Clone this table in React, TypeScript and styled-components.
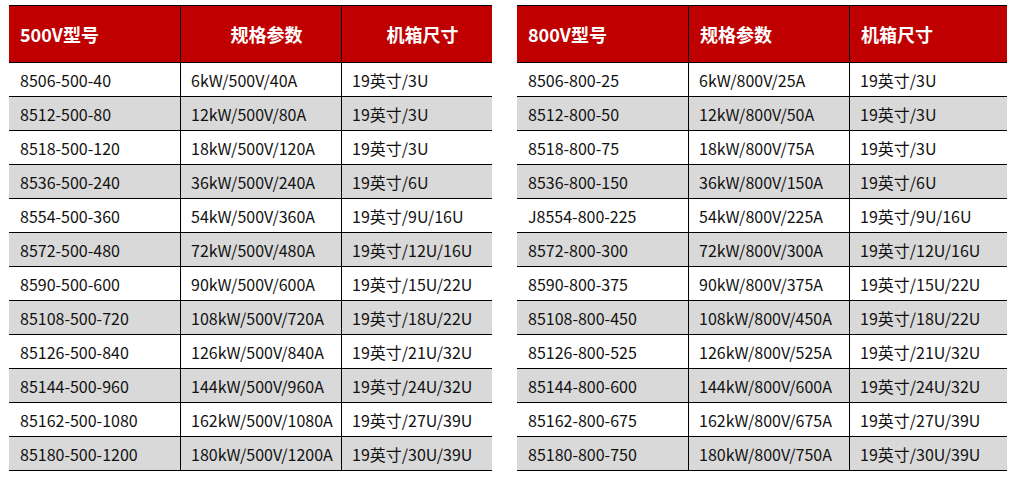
import React from "react";
import styled, { createGlobalStyle } from "styled-components";

const Global = createGlobalStyle`
  html, body { margin: 0; padding: 0; background: #ffffff; }
  body { font-family: "Noto Sans CJK SC", "Noto Sans", sans-serif; }
`;

const Page = styled.div`
  display: flex;
  align-items: flex-start;
  gap: 25px;
  padding: 5px 0 0 9px;
`;

const Table = styled.div<{ $cols: string }>`
  display: grid;
  grid-template-columns: ${(p) => p.$cols};
  border-top: 1px solid #000;
  border-bottom: 1px solid #000;
`;

const HeadCell = styled.div<{ $center?: boolean; $first?: boolean }>`
  height: 57px;
  background: #c00000;
  color: #ffffff;
  font-weight: 700;
  font-size: 18px;
  display: flex;
  align-items: center;
  justify-content: ${(p) => (p.$center ? "center" : "flex-start")};
  padding: 0 0 0 11px;
  box-sizing: border-box;
  border-left: ${(p) => (p.$first ? "none" : "1px solid #000")};
  border-bottom: 1px solid #000;
  white-space: nowrap;
`;

const Cell = styled.div<{ $gray: boolean; $first?: boolean; $last?: boolean }>`
  height: ${(p) => (p.$last ? "33px" : "34px")};
  background: ${(p) => (p.$gray ? "#d9d9d9" : "#ffffff")};
  color: #111;
  font-size: 16px;
  display: flex;
  align-items: center;
  padding-left: ${(p) => (p.$first ? "11px" : "10px")};
  box-sizing: border-box;
  border-left: ${(p) => (p.$first ? "none" : "1px solid #000")};
  border-bottom: ${(p) => (p.$last ? "none" : "1px solid #000")};
  white-space: nowrap;
`;

type Row = [string, string, string];

const left: Row[] = [
  ["8506-500-40", "6kW/500V/40A", "19英寸/3U"],
  ["8512-500-80", "12kW/500V/80A", "19英寸/3U"],
  ["8518-500-120", "18kW/500V/120A", "19英寸/3U"],
  ["8536-500-240", "36kW/500V/240A", "19英寸/6U"],
  ["8554-500-360", "54kW/500V/360A", "19英寸/9U/16U"],
  ["8572-500-480", "72kW/500V/480A", "19英寸/12U/16U"],
  ["8590-500-600", "90kW/500V/600A", "19英寸/15U/22U"],
  ["85108-500-720", "108kW/500V/720A", "19英寸/18U/22U"],
  ["85126-500-840", "126kW/500V/840A", "19英寸/21U/32U"],
  ["85144-500-960", "144kW/500V/960A", "19英寸/24U/32U"],
  ["85162-500-1080", "162kW/500V/1080A", "19英寸/27U/39U"],
  ["85180-500-1200", "180kW/500V/1200A", "19英寸/30U/39U"],
];

const right: Row[] = [
  ["8506-800-25", "6kW/800V/25A", "19英寸/3U"],
  ["8512-800-50", "12kW/800V/50A", "19英寸/3U"],
  ["8518-800-75", "18kW/800V/75A", "19英寸/3U"],
  ["8536-800-150", "36kW/800V/150A", "19英寸/6U"],
  ["J8554-800-225", "54kW/800V/225A", "19英寸/9U/16U"],
  ["8572-800-300", "72kW/800V/300A", "19英寸/12U/16U"],
  ["8590-800-375", "90kW/800V/375A", "19英寸/15U/22U"],
  ["85108-800-450", "108kW/800V/450A", "19英寸/18U/22U"],
  ["85126-800-525", "126kW/800V/525A", "19英寸/21U/32U"],
  ["85144-800-600", "144kW/800V/600A", "19英寸/24U/32U"],
  ["85162-800-675", "162kW/800V/675A", "19英寸/27U/39U"],
  ["85180-800-750", "180kW/800V/750A", "19英寸/30U/39U"],
];

function SpecTable({
  title,
  rows,
  cols,
  centerHead,
}: {
  title: string;
  rows: Row[];
  cols: string;
  centerHead: boolean;
}) {
  return (
    <Table $cols={cols}>
      <HeadCell $first>{title}</HeadCell>
      <HeadCell $center={centerHead}>规格参数</HeadCell>
      <HeadCell $center={centerHead}>机箱尺寸</HeadCell>
      {rows.map((r, i) =>
        r.map((v, j) => (
          <Cell
            key={`${i}-${j}`}
            $gray={i % 2 === 1}
            $first={j === 0}
            $last={i === rows.length - 1}
          >
            {v}
          </Cell>
        ))
      )}
    </Table>
  );
}

export default function App() {
  return (
    <>
      <Global />
      <Page>
        <SpecTable title="500V型号" rows={left} cols="171px 161px 151px" centerHead />
        <SpecTable title="800V型号" rows={right} cols="171px 161px 158px" centerHead={false} />
      </Page>
    </>
  );
}
